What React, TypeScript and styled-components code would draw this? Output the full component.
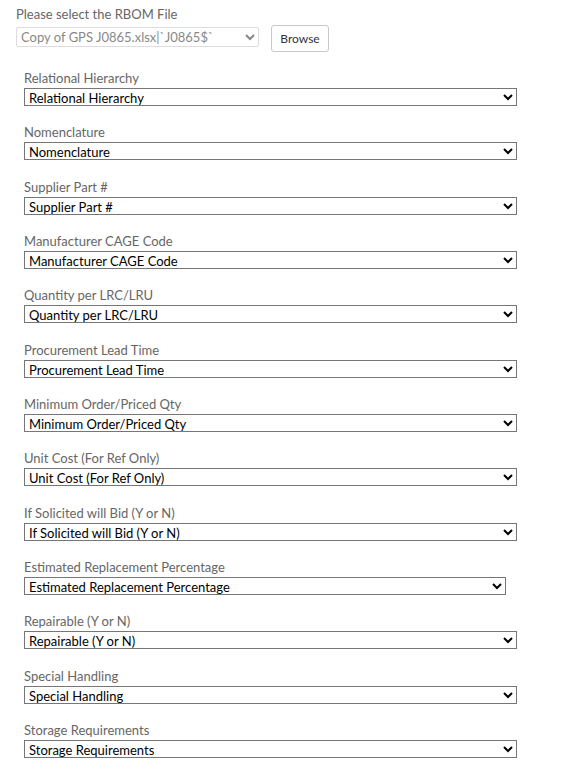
import React from "react";
import styled, { createGlobalStyle } from "styled-components";

const GlobalStyle = createGlobalStyle`
  html, body {
    margin: 0;
    padding: 0;
    background: #ffffff;
  }
  body {
    font-family: Lato, "Open Sans", Arial, sans-serif;
    font-size: 13px;
    color: #333;
  }
`;

const Page = styled.div`
  padding: 5px 16px 0 16px;
`;

const FileSection = styled.div`
  display: flex;
  flex-direction: column;
  gap: 2px;
`;

const FileLabel = styled.label`
  font-size: 13px;
  line-height: 18px;
  color: #666;
`;

const FileRow = styled.div`
  display: flex;
  align-items: flex-start;
  gap: 12px;
`;

const FileSelect = styled.select`
  width: 243px;
  height: 20px;
  margin-top: 2px;
  font-family: inherit;
  font-size: 13px;
  color: #555;
  border: 1px solid #d0d0d0;
  border-radius: 2px;
  background: #fff;
  padding: 0;
`;

const BrowseButton = styled.button`
  height: 27px;
  width: 58px;
  padding: 0;
  font-family: inherit;
  font-size: 12px;
  color: #333;
  background: #fff;
  border: 1px solid #c8c8c8;
  border-radius: 3px;
`;

const Mappings = styled.div`
  display: flex;
  flex-direction: column;
  padding: 18px 0 0 8px;
`;

const Field = styled.div`
  display: flex;
  flex-direction: column;
  height: 54.33px;
`;

const FieldLabel = styled.label`
  font-size: 13px;
  line-height: 16px;
  color: #666;
  margin-bottom: 2px;
`;

const FieldSelect = styled.select<{ $width: number }>`
  width: ${(p) => p.$width}px;
  height: 18px;
  font-family: inherit;
  font-size: 13px;
  color: #000;
  border: 1px solid #767676;
  border-radius: 0;
  background: #fff;
  padding: 0;
`;

const fields: { label: string; width?: number }[] = [
  { label: "Relational Hierarchy" },
  { label: "Nomenclature" },
  { label: "Supplier Part #" },
  { label: "Manufacturer CAGE Code" },
  { label: "Quantity per LRC/LRU" },
  { label: "Procurement Lead Time" },
  { label: "Minimum Order/Priced Qty" },
  { label: "Unit Cost (For Ref Only)" },
  { label: "If Solicited will Bid (Y or N)" },
  { label: "Estimated Replacement Percentage", width: 482 },
  { label: "Repairable (Y or N)" },
  { label: "Special Handling" },
  { label: "Storage Requirements" },
];

export default function App() {
  return (
    <>
      <GlobalStyle />
      <Page>
        <FileSection>
          <FileLabel>Please select the RBOM File</FileLabel>
          <FileRow>
            <FileSelect disabled defaultValue="gps">
              <option value="gps">Copy of GPS J0865.xlsx|`J0865$`</option>
            </FileSelect>
            <BrowseButton type="button">Browse</BrowseButton>
          </FileRow>
        </FileSection>
        <Mappings>
          {fields.map((f) => (
            <Field key={f.label}>
              <FieldLabel>{f.label}</FieldLabel>
              <FieldSelect $width={f.width ?? 493} defaultValue={f.label}>
                <option value={f.label}>{f.label}</option>
              </FieldSelect>
            </Field>
          ))}
        </Mappings>
      </Page>
    </>
  );
}
